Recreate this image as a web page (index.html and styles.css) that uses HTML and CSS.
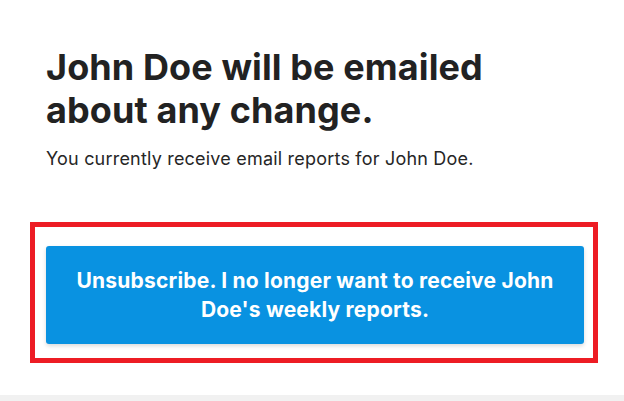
FILE: index.html
```html
<!DOCTYPE html>
<html lang="en">
<head>
  <meta charset="UTF-8" />
  <title>Email reports</title>
  <link rel="stylesheet" href="styles.css">
</head>
<body>
  <div class="card">
    <h1>John Doe will be emailed about any change.</h1>
    <p class="lead">You currently receive email reports for John Doe.</p>

    <div class="highlight">
      <button class="unsub-btn">Unsubscribe. I no longer want to receive John Doe's weekly reports.</button>
    </div>
  </div>
</body>
</html>
```

FILE: styles.css
```css
html, body {
  margin: 0;
  padding: 0;
  font-family: 'Inter', 'Noto Sans', sans-serif;
  background: #f1f1f1;
  color: #222222;
}

.card {
  background: #ffffff;
  height: 395px;
  box-sizing: border-box;
  padding: 46px 40px 0 46px;
  box-shadow: 0 1px 3px rgba(0,0,0,0.35);
}

h1 {
  margin: 0;
  max-width: 480px;
  font-size: 36px;
  line-height: 43px;
  font-weight: 700;
  letter-spacing: 0.1px;
  color: #222222;
}

.lead {
  margin: 15px 0 0;
  font-size: 18px;
  line-height: 24px;
  letter-spacing: 0.2px;
  color: #262626;
}

.highlight {
  margin: 51px -14px 0 -16px;
  border: 5px solid #ed1c24;
  padding: 19px 9px 14px 11px;
}

.unsub-btn {
  display: block;
  width: 100%;
  padding: 20px 20px;
  border: none;
  border-radius: 3px;
  background: #0992e1;
  color: #ffffff;
  font-family: inherit;
  font-size: 21px;
  line-height: 29px;
  font-weight: 700;
  letter-spacing: 0.2px;
  text-align: center;
  box-shadow: 0 2px 4px rgba(0,0,0,0.15);
  cursor: pointer;
}
```
